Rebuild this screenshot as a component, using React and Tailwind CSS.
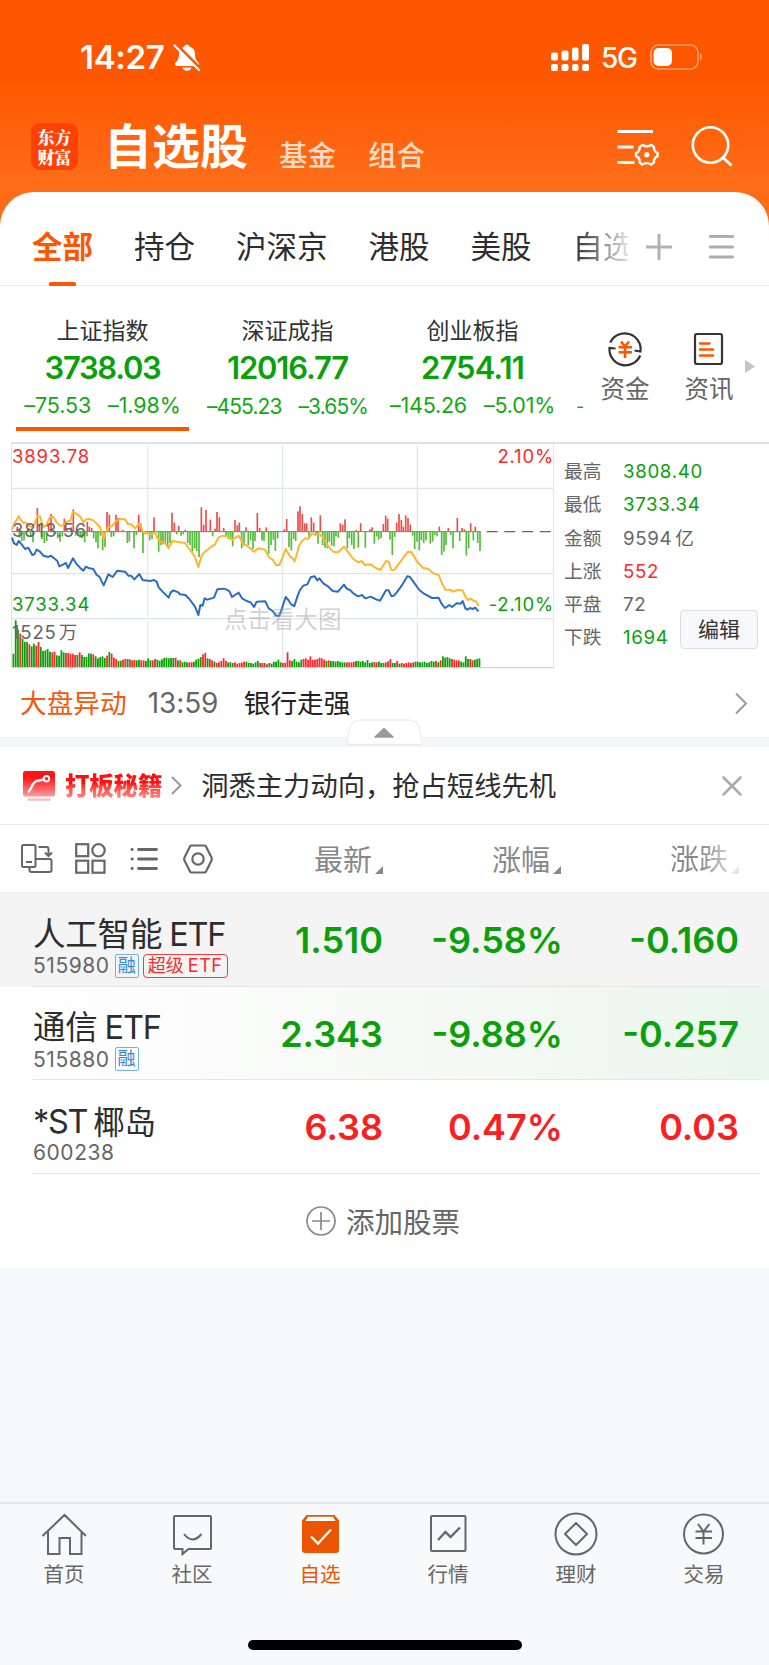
import React from "react";

const BLUE = "36,308 42,325 50,330 56,318 65,328 75,342 85,338 97,360 103,358 110,344 120,350 130,362 145,366 152,362 165,372 172,378 178,394 190,388 198,384 204,399 219,370 228,385 240,398 250,407 258,395 268,400 280,402 290,420 298,425 311,451 325,418 338,426 352,407 375,410 385,422 393,422 403,433 418,417 428,435 450,438 462,435 470,440 476,457 490,472 506,488 512,472 520,466 535,472 540,478 556,480 568,492 585,515 595,540 601,510 608,512 614,490 622,494 642,488 652,463 672,461 685,466 690,472 696,486 716,473 726,490 740,498 752,502 762,516 770,500 796,499 806,520 818,528 828,542 838,542 846,520 857,486 865,495 873,508 883,513 892,485 900,465 910,452 922,448 932,427 944,424 952,436 958,430 970,445 985,455 998,468 1014,470 1032,449 1040,461 1050,465 1060,475 1074,484 1086,480 1096,490 1112,485 1130,494 1140,497 1158,466 1166,466 1174,483 1182,482 1192,470 1205,452 1222,424 1230,426 1240,440 1258,465 1272,476 1296,489 1316,488 1324,505 1335,519 1348,510 1356,516 1370,505 1382,506 1388,498 1396,520 1403,524 1410,519 1418,522 1426,518 1435,529";
const YELLOW = "36,285 44,262 50,255 56,243 62,254 70,264 76,262 84,270 96,276 103,268 112,243 120,245 130,276 138,272 150,246 160,246 170,262 180,272 190,270 200,260 210,258 219,231 228,236 240,244 250,262 258,253 268,252 280,256 292,268 300,276 311,310 318,290 325,276 335,274 350,256 362,252 375,253 385,268 395,268 405,280 418,266 428,290 440,294 455,298 465,292 475,314 485,322 495,324 506,340 517,318 535,321 555,324 570,344 585,366 595,396 605,362 615,350 630,338 645,328 655,308 668,302 685,304 697,314 716,302 728,325 745,335 762,350 775,340 795,344 808,368 818,374 828,390 838,390 848,366 857,342 870,364 878,370 884,379 892,352 898,330 906,318 916,310 926,311 936,294 944,300 958,296 968,308 976,318 985,335 1000,350 1014,352 1032,335 1045,352 1060,372 1075,382 1085,378 1095,390 1112,388 1125,398 1141,405 1158,378 1166,380 1174,405 1184,404 1195,388 1210,368 1224,350 1234,351 1250,378 1268,398 1285,402 1300,415 1316,420 1326,445 1336,464 1350,464 1358,470 1374,465 1388,466 1396,485 1404,495 1412,491 1420,497 1428,499 1436,513";
const UP = [[52,14],[84,10],[112,70],[118,20],[146,22],[153,52],[193,38],[200,8],[214,12],[220,66],[262,28],[268,14],[275,10],[321,58],[328,50],[348,50],[354,40],[368,4],[416,50],[422,24],[462,42],[516,56],[523,26],[536,16],[556,5],[604,72],[611,20],[618,64],[631,35],[645,8],[651,58],[658,42],[671,10],[705,34],[712,18],[718,26],[738,12],[772,55],[779,10],[799,12],[853,6],[860,37],[894,60],[900,75],[907,52],[914,24],[920,24],[934,42],[941,26],[961,48],[1021,24],[1028,20],[1035,36],[1069,4],[1082,24],[1110,6],[1116,12],[1150,22],[1157,47],[1163,38],[1190,26],[1197,52],[1204,34],[1210,14],[1217,48],[1224,40],[1231,20],[1318,14],[1345,10],[1372,40],[1386,10],[1393,6],[1412,24],[1426,14]];
const DOWN = [[58,18],[65,28],[72,26],[92,16],[99,32],[126,22],[133,34],[140,28],[166,8],[173,20],[180,30],[187,14],[227,12],[234,10],[241,18],[247,20],[254,32],[261,14],[281,20],[288,32],[294,50],[301,12],[308,56],[315,46],[334,16],[341,14],[382,34],[388,30],[402,50],[409,10],[429,64],[436,8],[449,26],[456,22],[476,60],[483,40],[489,38],[496,36],[503,44],[510,34],[530,8],[543,12],[550,8],[563,34],[570,40],[577,60],[584,50],[590,58],[597,76],[638,14],[678,16],[685,22],[692,24],[698,44],[725,50],[732,42],[745,40],[752,26],[759,52],[765,28],[786,26],[792,28],[806,66],[813,40],[820,24],[826,58],[833,20],[867,46],[874,56],[881,22],[887,28],[927,16],[948,8],[954,36],[968,40],[975,48],[982,50],[988,30],[995,42],[1002,44],[1008,14],[1015,18],[1042,50],[1048,20],[1055,40],[1062,52],[1075,48],[1096,48],[1123,36],[1130,14],[1136,24],[1143,20],[1170,24],[1177,70],[1184,16],[1238,12],[1244,52],[1251,30],[1258,56],[1264,26],[1271,34],[1278,26],[1291,36],[1298,30],[1304,10],[1311,14],[1325,70],[1332,60],[1338,40],[1352,10],[1359,50],[1379,28],[1399,72],[1406,50],[1420,26],[1433,34],[1440,58]];
// Runs of volume bars: colour code followed by bar height.
const VOLUME = "g40 g140 g112 r100 g85 g75 g75 r68 g62 g70 r64 r75 g60 g48 g50 g54 g46 r44 r46 g35 g34 g50 g44 r42 r42 r40 r40 r36 g36 r44 g36 g30 g30 g41 g40 r38 g32 g26 g30 g32 g27 r34 g45 r40 r28 r24 g18 g19 r22 r24 g24 r23 r20 r21 g20 g22 r20 r20 g18 g26 g20 r20 r24 g22 g19 g23 g27 g28 g26 g27 g27 r28 g20 r20 g14 g16 g14 r14 r14 g16 g22 g25 g30 r38 r43 g26 r24 r20 g16 r12 r14 r18 r26 r18 g14 g14 g12 r14 r10 r12 r13 r16 g16 g12 g12 g10 g14 g18 r12 r12 r12 g8 r12 g10 g16 g16 g22 g14 r12 r13 r44 r20 g18 g24 g16 g14 g22 r24 r26 r22 r32 r22 r22 r24 r28 r26 r22 g18 r20 g18 g18 g16 g18 g15 g14 g14 r14 r14 r14 r15 g18 g18 g16 g18 g14 g21 g12 g14 r15 r14 g16 g12 g12 r14 r17 r24 g12 g12 r18 g10 r12 r10 r12 r14 r12 r14 g16 g16 g14 g14 g16 g12 g14 g18 g16 r18 g14 r20 g32 g28 g30 g26 r24 r22 r20 r20 g16 g14 g32 g24 r24 r20 g22 g24 g26".split(" ");
const PITCH = 1405 / VOLUME.length;

function Chart() {
  return (
    <svg className="block h-[228px] w-[544px]" viewBox="33 18 1632 684">
      <g fill="none" stroke="#dfe3ec" strokeWidth="4">
        <path d="M34.500 24V699M1661 24V699" strokeWidth="3" />
        <path d="M443 32V546M443 558V699M848 32V546M848 558V699M1252 32V546M1252 558V699" stroke="#e3e7ef" />
        <path d="M36 160H1660M36 416H1660M36 551H1660" />
        <path d="M36 698H1662" stroke="#d3d5db" />
        <path d="M33 24H1665" stroke="#dfe1ea" strokeWidth="6" />
      </g>
      <path d="M36 290H1442" stroke="#777" strokeWidth="3" />
      <path d="M1460 290H1660" stroke="#666" strokeWidth="3.500" strokeDasharray="33 20" />
      {UP.map(([x, h]) => <rect key={x} x={x - 2.5} y={289 - h} width="5" height={h} fill="#ef4b4b" />)}
      {DOWN.map(([x, h]) => <rect key={x} x={x - 2.5} y="290" width="5" height={h} fill="#55bb3b" />)}
      {VOLUME.map((v, i) => {
        const h = Number(v.slice(1));
        return <rect key={i} x={37.5 + i * PITCH} y={696 - h} width="5.4" height={h} fill={v[0] === "r" ? "#fb2a2a" : "#0aa00a"} />;
      })}
      <polyline points={YELLOW} fill="none" stroke="#ffb62e" strokeWidth="6" strokeLinejoin="round" />
      <polyline points={BLUE} fill="none" stroke="#2a6cc4" strokeWidth="6" strokeLinejoin="round" />
    </svg>
  );
}

function StatusBar() {
  return (
    <div className="flex h-[114px] shrink-0 items-center pl-[80px] text-white">
      <span className="w-[87px] pt-[1px] text-[33px] font-semibold leading-none tracking-[-0.300px]">14:27</span>
      <svg className="ml-[6px] h-[29px] w-[28px]" viewBox="0 0 28 29">
        <path d="M14 1.500c-1.300 0-2.200.7-2.500 1.900C8 4.500 6 7.300 6 11c0 4.500-1 6-3.200 8.300C1.300 20.900 1.700 23 3.500 23h21c1.800 0 2.200-2.100.7-3.700C23 17 22 15.500 22 11c0-3.700-2-6.500-5.500-7.600C16.200 2.200 15.300 1.500 14 1.500zM9.500 24.500c.5 2 2.200 3.300 4.500 3.300s4-1.300 4.500-3.300z" fill="#fff" />
        <path d="M2.500 .5L28 26" stroke="#ff5700" strokeWidth="3" />
        <path d="M1.500 2.500L26 27" stroke="#fff" strokeWidth="2.200" strokeLinecap="round" />
      </svg>
      <svg className="ml-[350px] h-[29px] w-[39px]" viewBox="0 0 39 29" fill="#fff">
        <rect x="0" y="9.500" width="7" height="8" rx="2" /><rect x="10.500" y="7.500" width="7" height="10" rx="2" /><rect x="21" y="4.500" width="6.500" height="13" rx="2" /><rect x="31" y="1" width="7" height="16.500" rx="2" />
        <rect x="0" y="21" width="7" height="7" rx="2" /><rect x="10.500" y="21" width="7" height="7" rx="2" /><rect x="21" y="21" width="6.500" height="7" rx="2" /><rect x="31" y="21" width="7" height="7" rx="2" />
      </svg>
      <span className="ml-[11px] w-[37px] pt-[2px] text-[28px] font-medium leading-none tracking-[-1.200px]">5G</span>
      <svg className="ml-[12px] h-[26px] w-[54px]" viewBox="0 0 54 26">
        <rect x="1" y="1" width="47" height="24" rx="7.500" fill="none" stroke="#ffa069" strokeWidth="1.600" />
        <rect x="3.500" y="4" width="18.500" height="18" rx="5" fill="#fff" />
        <path d="M50 9.500c2.500 1 2.500 6 0 7z" fill="#ffa069" />
      </svg>
    </div>
  );
}

function TitleBar() {
  return (
    <div className="flex h-[78px] shrink-0 items-start pl-[31px] text-white">
      <div className="mt-[9px] flex h-[47px] w-[47px] flex-col items-center justify-center rounded-[9px] bg-[#ff4106] font-['Noto_Serif_CJK_SC','Noto_Sans_CJK_SC',serif] text-[17px] font-black leading-[20px]">
        <span>东方</span><span>财富</span>
      </div>
      <span className="ml-[26px] mt-[9px] w-[144px] whitespace-nowrap text-[48px] font-bold leading-[48px]">自选股</span>
      <span className="ml-[31px] mt-[28px] text-[28.500px] font-medium leading-[28px] text-[#ffdcc8]">基金</span>
      <span className="ml-[32px] mt-[28px] text-[28.500px] font-medium leading-[28px] text-[#ffdcc8]">组合</span>
      <svg className="ml-[191px] mt-[13px] h-[40px] w-[44px]" viewBox="0 0 44 40" fill="none" stroke="#fff" strokeWidth="2.800">
        <path d="M1.500 4.500H37M1.500 20H17.500M1.500 35.500H18.500" />
        <path d="M26.300 17.900Q30.800 20.600 35.300 17.900L38 20Q37.400 24.200 41.600 26.100V29.200Q37.400 31.100 38 35.400L35.300 37.500Q30.800 34.800 26.300 37.500L23.600 35.400Q24.200 31.100 20 29.200V26.100Q24.200 24.200 23.600 20Z" strokeWidth="2.400" strokeLinejoin="round" />
        <circle cx="30.800" cy="27.700" r="2.600" fill="#fff" stroke="none" />
      </svg>
      <svg className="ml-[31px] mt-[11px] h-[43px] w-[43px]" viewBox="0 0 43 43" fill="none" stroke="#fff" strokeWidth="2.600">
        <circle cx="19.500" cy="20" r="17.700" /><path d="M31.500 32L40.500 40.500" strokeWidth="3" />
      </svg>
    </div>
  );
}

function Tabs() {
  return (
    <div className="flex h-[94px] shrink-0 items-center border-b border-[#ececec] pl-[32px]">
      <div className="flex h-[94px] w-[596px] gap-[41px] self-start overflow-hidden whitespace-nowrap text-[30.500px] leading-[94px] text-[#2d2d2d]">
        <div className="relative h-[94px] text-[#ff5500]">
          <span className="block pt-[8px] font-bold">全部</span>
          <div className="absolute bottom-0 left-[17px] h-[4px] w-[27px] rounded-t-[2px] bg-[#ff5500]" />
        </div>
        {["持仓", "沪深京", "港股", "美股"].map((t) => <span key={t} className="pt-[8px]">{t}</span>)}
        <span className="bg-gradient-to-r from-[#2d2d2d] to-[#f0f0f0] to-[58px] bg-clip-text pt-[8px] text-transparent">自选</span>
      </div>
      <svg className="ml-[18px] mt-[17px] h-[26px] w-[26px] shrink-0" viewBox="0 0 26 26" stroke="#b2b2b2" strokeWidth="3"><path d="M0 13H26M13 0V26" /></svg>
      <svg className="ml-[37px] mt-[17px] h-[26px] w-[25px] shrink-0" viewBox="0 0 25 26" stroke="#aeaeae" strokeWidth="2.800"><path d="M1 2.500H24M1 13H24M1 23H24" strokeLinecap="round" /></svg>
    </div>
  );
}

const INDICES = [
  ["上证指数", "3738.03", "–75.53", "–1.98%", "tracking-[-1.300px]", "text-[21.500px] tracking-[-0.100px]"],
  ["深证成指", "12016.77", "–455.23", "–3.65%", "tracking-[-1.200px]", "text-[21px] tracking-[-0.900px]"],
  ["创业板指", "2754.11", "–145.26", "–5.01%", "tracking-[-0.900px]", "text-[21.500px] tracking-[-0.200px]"],
];

function IndexRow() {
  return (
    <div className="flex h-[156px] shrink-0 pl-[16px]">
      <div className="flex w-[568px] overflow-hidden whitespace-nowrap">
        {INDICES.map(([n, v, a, b, c1, c2], i) => (
          <div key={n} className={i ? "ml-[12px] w-[173px] shrink-0" : "w-[173px] shrink-0"}>
            <div className="mt-[32px] flex h-[26px] items-center justify-center text-[23px] leading-none text-[#333]"><span>{n}</span></div>
            <div className={"mt-[6px] flex h-[34px] items-center justify-center text-[31px] font-semibold leading-none text-[#0aa00a] " + c1}><span>{v}</span></div>
            <div className={"mt-[9px] flex h-[26px] items-center justify-center gap-[17px] leading-none text-[#12a912] " + c2}><span>{a}</span><span>{b}</span></div>
            {i === 0 && <div className="mt-[8px] h-[4px] bg-[#ff5500]" />}
          </div>
        ))}
        <span className="ml-[17px] mt-[108px] text-[18px] leading-[26px] text-[#12a912]">-</span>
      </div>
      <div className="ml-[16px] mt-[44px] flex w-[50px] shrink-0 flex-col items-center whitespace-nowrap">
        <svg className="h-[38px] w-[38px]" viewBox="0 0 38 38" fill="none" stroke="#333" strokeWidth="2.200">
          <path d="M4.200 12.500A16 16 0 0 1 34.500 21.500L28.500 20.500M34.200 25.500A16 16 0 0 1 3.500 18L9.500 18.500" />
          <path d="M15 11.500L19 16.500L23 11.500M12.500 17.200H26M12.500 22.200H26M19 16.500V28" stroke="#ff5500" strokeWidth="2.600" />
        </svg>
        <span className="mt-[8px] text-[24.500px] leading-[26px] text-[#666]">资金</span>
      </div>
      <div className="ml-[34px] mt-[44px] flex w-[50px] shrink-0 flex-col items-center whitespace-nowrap">
        <svg className="h-[38px] w-[38px]" viewBox="0 0 38 38" fill="none" stroke="#333" strokeWidth="2.200">
          <rect x="5" y="4" width="27" height="30" rx="2" />
          <path d="M10 13.500H19.500M10 19.500H23M10 25.500H23" stroke="#ff5500" strokeWidth="2.600" strokeLinecap="round" />
        </svg>
        <span className="mt-[8px] text-[24.500px] leading-[26px] text-[#666]">资讯</span>
      </div>
      <svg className="ml-[11px] mt-[74px] h-[13px] w-[10px] shrink-0" viewBox="0 0 10 13"><path d="M0 0L10 6.500L0 13Z" fill="#c4c4c4" /></svg>
    </div>
  );
}

const STATS = [
  ["最高", "3808.40", "text-[#0aa00a]"], ["最低", "3733.34", "text-[#0aa00a]"], ["金额", <>9594<span className="ml-[3px]">亿</span></>, "text-[#666]"],
  ["上涨", "552", "text-[#fb2a2a]"], ["平盘", "72", "text-[#666]"], ["下跌", "1694", "text-[#0aa00a]"],
];

function Market() {
  return (
    <div className="flex h-[227px] shrink-0">
      <div className="relative ml-[11px] h-[227px] w-[544px] text-[18.500px] leading-[20px] tracking-[0.850px]">
        <div className="absolute left-0 top-[-1px]"><Chart /></div>
        <span className="absolute left-[213px] top-[166px] text-[23.500px] leading-[24px] tracking-normal text-[#999]/45">点击看大图</span>
        <span className="absolute left-[1px] top-[4px] text-[#fb2a2a]">3893.78</span>
        <span className="absolute right-[1px] top-[4px] text-[#fb2a2a]">2.10%</span>
        <span className="absolute left-[1px] top-[78px] text-[#666]">3813.56</span>
        <span className="absolute left-[1px] top-[152px] text-[#0aa00a]">3733.34</span>
        <span className="absolute right-[1px] top-[152px] text-[#0aa00a]">-2.10%</span>
        <span className="absolute left-[1px] top-[180px] whitespace-nowrap text-[#666]">1525<span className="ml-[2px]">万</span></span>
      </div>
      <div className="relative grow border-t-2 border-[#dfe1ea] pt-[12px]">
        {STATS.map(([k, v, c]) => (
          <div key={k} className="flex h-[33.200px] items-center pl-[9px] text-[18.700px] leading-none">
            <span className="w-[59px] text-[#666]">{k}</span><span className={"tracking-[0.650px] " + c}>{v}</span>
          </div>
        ))}
        <button className="absolute right-[11px] top-[166px] flex h-[39px] w-[78px] items-center justify-center rounded-[4px] border border-[#dadce3] bg-[#f7f8fb] text-[21px] leading-none text-[#333]">编辑</button>
      </div>
    </div>
  );
}

function News() {
  return (
    <div className="relative h-[78px] shrink-0 border-b-[10px] border-[#f5f6fa]">
      <div className="flex h-[68px] items-center pl-[20px] text-[26.700px] leading-none">
        <span className="text-[#f25a0c]">大盘异动</span>
        <span className="ml-[21px] w-[96px] text-[28px] tracking-[-0.100px] text-[#666]">13:59</span>
        <span className="text-[#222]">银行走强</span>
        <svg className="ml-auto mr-[21px] h-[23px] w-[13px]" viewBox="0 0 13 23" fill="none" stroke="#999" strokeWidth="2"><path d="M1 1.500L11 11.500L1 21.500" /></svg>
      </div>
      <svg className="absolute left-[346px] top-[50px] h-[27px] w-[77px]" viewBox="0 0 77 27">
        <path d="M1 25C3 17 1 1 14 1H63C76 1 74 17 76 25" fill="#fff" stroke="#eeeff3" strokeWidth="1.500" />
        <path d="M1 25.500H76" stroke="#e9eaf0" strokeWidth="1.500" />
        <path d="M29 18L38 9.500L47 18Z" fill="#999" stroke="#999" strokeWidth="1.500" strokeLinejoin="round" />
      </svg>
    </div>
  );
}

function Promo() {
  return (
    <div className="flex h-[78px] shrink-0 items-center border-b border-[#e8e8e8] pl-[23px]">
      <svg className="h-[30px] w-[32px]" viewBox="0 0 32 30">
        <defs><linearGradient id="promo" x1="0" y1="0" x2="0" y2="1"><stop offset="0.250" stopColor="#ff1414" /><stop offset="1" stopColor="#ff9c9c" /></linearGradient></defs>
        <rect width="32" height="25.500" rx="2.500" fill="url(#promo)" />
        <rect x="4.500" y="27.500" width="23" height="2.300" rx="1" fill="#ffbcbc" />
        <path d="M5.500 20.500C8.500 19 9 9.500 15.500 9.500C17.500 9.500 18.500 9 21 8" fill="none" stroke="#fff" strokeWidth="2.400" strokeLinecap="round" />
        <circle cx="23.500" cy="7.700" r="2.700" fill="none" stroke="#fff" strokeWidth="2" />
      </svg>
      <span className="ml-[10px] bg-gradient-to-b from-[#ff1010] from-40% to-[#ff8a8a] bg-clip-text text-[24.500px] font-black leading-[26px] tracking-[-0.200px] text-transparent">打板秘籍</span>
      <svg className="ml-[9px] h-[19px] w-[11px]" viewBox="0 0 11 19" fill="none" stroke="#999" strokeWidth="2"><path d="M1 1L9.500 9.500L1 18" /></svg>
      <span className="ml-[19px] pt-[2px] text-[27.300px] leading-none text-[#2d2d2d]">洞悉主力动向，抢占短线先机</span>
      <svg className="ml-auto mr-[27px] h-[20px] w-[20px]" viewBox="0 0 20 20" stroke="#aaa" strokeWidth="2.500" strokeLinecap="round"><path d="M1.500 1.500L18.500 18.500M18.500 1.500L1.500 18.500" /></svg>
    </div>
  );
}

function Corner({ c }) {
  return <svg className="ml-[3px] mt-[19px] h-[8px] w-[8px]" viewBox="0 0 8 8"><path d="M8 0V8H0Z" fill={c} /></svg>;
}

function Toolbar() {
  return (
    <div className="flex h-[68px] shrink-0 items-center border-b border-[#ececec] pl-[21px] text-[29px] leading-none text-[#888]">
      <svg className="h-[29px] w-[32px]" viewBox="0 0 32 29" fill="none" stroke="#666" strokeWidth="2">
        <rect x="1" y="1" width="13.500" height="22" rx="1.500" /><path d="M5 18H11M17.500 3H25.500Q27.500 3 27.500 5V11M24 8.500L27.500 12L31 8.500" />
        <path d="M14.500 15H28.500Q30.500 15 30.500 17V26Q30.500 28 28.500 28H10.500Q8.500 28 8.500 26V23" />
      </svg>
      <svg className="ml-[22px] h-[31px] w-[31px]" viewBox="0 0 31 31" fill="none" stroke="#666" strokeWidth="2.200">
        <rect x="1.200" y="1.200" width="12" height="12" /><circle cx="23.500" cy="7.300" r="6.200" /><rect x="1.200" y="17.700" width="12" height="12" /><rect x="17.500" y="17.700" width="12" height="12" />
      </svg>
      <svg className="ml-[24px] h-[24px] w-[28px]" viewBox="0 0 28 24" fill="none" stroke="#666" strokeWidth="2.800" strokeLinecap="round"><path d="M8.500 2.500H26.500M8.500 12H26.500M8.500 21.500H26.500M2 2.500H2.300M2 12H2.300M2 21.500H2.300" /></svg>
      <svg className="ml-[25px] h-[30px] w-[30px]" viewBox="0 0 30 30" fill="none" stroke="#666" strokeWidth="2.200" strokeLinejoin="round"><path d="M8.500 1.500H21.500Q22.300 1.500 23 2.500L28.500 13.500Q29 15 28.500 16.500L23 27.500Q22.300 28.500 21.500 28.500H8.500Q7.700 28.500 7 27.500L1.500 16.500Q1 15 1.500 13.500L7 2.500Q7.700 1.500 8.500 1.500Z" /><circle cx="15" cy="15" r="5.700" /></svg>
      <div className="ml-[101px] flex items-center pt-[3px]"><span>最新</span><Corner c="#888" /></div>
      <div className="ml-[109px] flex items-center pt-[3px]"><span>涨幅</span><Corner c="#888" /></div>
      <div className="ml-[109px] flex items-center pt-[3px]"><span className="bg-gradient-to-r from-[#888] from-50% to-[#ccc] bg-clip-text leading-[34px] text-transparent">涨跌</span><Corner c="#e6e6e6" /></div>
    </div>
  );
}

function Rows() {
  const rows = [
    { name: <><span>人工智能</span><span className="ml-[7px] tracking-[-1.200px]">ETF</span></>, code: "515980", tags: 2, vals: ["1.510", "-9.58%", "-0.160"], c: "text-[#0aa00a]", bg: "bg-[#f4f4f4]" },
    { name: <><span>通信</span><span className="ml-[7px] tracking-[-1.200px]">ETF</span></>, code: "515880", tags: 1, vals: ["2.343", "-9.88%", "-0.257"], c: "text-[#0aa00a]", bg: "bg-gradient-to-r from-white via-[#f7f9f7] via-50% to-[#eaf7ec]" },
    { name: <><span className="tracking-[-1.300px]">*ST</span><span className="ml-[6px] text-[31.500px]">椰岛</span></>, code: "600238", tags: 0, vals: ["6.38", "0.47%", "0.03"], c: "text-[#fb2020]", bg: "bg-white" },
  ];
  return rows.map((r) => (
    <div key={r.code} className={"relative flex h-[93.700px] shrink-0 " + r.bg}>
      <div className="ml-[33px] w-[200px] pt-[24px]">
        <div className="flex h-[36px] items-center whitespace-nowrap text-[32.500px] leading-none tracking-[-0.200px] text-[#2d2d2d]">{r.name}</div>
        <div className="flex h-[25px] items-center">
          <span className="text-[21px] leading-none tracking-[0.550px] text-[#666]">{r.code}</span>
          {r.tags > 0 && <span className="ml-[5px] flex h-[24px] w-[24px] items-center justify-center rounded-[2px] border-[1.500px] border-[#77aeea] text-[18px] leading-none text-[#3585e0]">融</span>}
          {r.tags > 1 && <span className="ml-[4px] flex h-[24px] w-[85px] items-center justify-center whitespace-nowrap rounded-[4px] border-[1.500px] border-[#fb3a3a] text-[18px] leading-none text-[#fb2a2a]">超级<span className="ml-[4px] tracking-[0.500px]">ETF</span></span>}
        </div>
      </div>
      <div className={"flex items-center text-right text-[36px] font-semibold leading-none " + r.c}>
        <span className="w-[150px]">{r.vals[0]}</span><span className="w-[180px]">{r.vals[1]}</span><span className="w-[176px]">{r.vals[2]}</span>
      </div>
      <div className="absolute bottom-0 left-[32px] right-[9px] h-px bg-[#e6e6e6]" />
    </div>
  ));
}

function Nav({ label, on, children }) {
  return (
    <div className={"flex w-[128px] flex-col items-center pt-[8px] " + (on ? "text-[#ec5500]" : "text-[#666]")}>
      <svg className="h-[46px] w-[46px]" viewBox="0 0 46 46" fill="none" stroke="currentColor" strokeWidth="2">{children}</svg>
      <span className="mt-[4px] text-[20.500px] leading-[26px]">{label}</span>
    </div>
  );
}

export default function App() {
  return (
    <div className="flex h-[1665px] w-[769px] flex-col overflow-hidden bg-[#f7f8fb] font-['Inter','Noto_Sans_CJK_SC',sans-serif]">
      <div className="flex flex-col bg-[linear-gradient(#ff5700_0px,#ff5700_80px,#ff6c18_180px,#ff6c18_100%)]">
        <StatusBar />
        <TitleBar />
        <div className="flex flex-col rounded-t-[34px] bg-white">
          <Tabs />
          <IndexRow />
        </div>
      </div>
      <div className="flex flex-col bg-white">
        <Market />
        <News />
        <Promo />
        <Toolbar />
        <Rows />
        <div className="flex h-[94px] items-center pl-[306px]">
          <svg className="h-[30px] w-[30px]" viewBox="0 0 30 30" fill="none" stroke="#888" strokeWidth="1.700"><circle cx="15" cy="15" r="14" /><path d="M6 15H24M15 6V24" /></svg>
          <span className="ml-[10px] pt-[4px] text-[28.500px] leading-none text-[#666]">添加股票</span>
        </div>
      </div>
      <div className="grow" />
      <div className="h-[163px] border-t-2 border-[#e8e9ec] bg-[#f8f9fb]">
        <div className="flex h-[136px]">
          <Nav label="首页"><path d="M1.500 24L23.500 3L45 24M7 19V42H18.500V26H29V42H40.500V19" /></Nav>
          <Nav label="社区"><path d="M6 4H41Q42 4 42 5V36Q42 37 41 37H19.500L13.500 42V37H6Q5 37 5 36V5Q5 4 6 4Z" /><path d="M15 22Q23.500 33 32.500 22" /></Nav>
          <Nav label="自选" on><path d="M9.500 3H37.500L42 8.500V38Q42 41 39 41H8Q5 41 5 38V8.500Z" fill="currentColor" stroke="none" /><path d="M11 4.800H36L38.500 9H8.500Z" fill="#fff" stroke="none" /><path d="M14 24.500L21 31.500L34 17.500" stroke="#fff" strokeWidth="2.300" /></Nav>
          <Nav label="行情"><rect x="6" y="4" width="34.500" height="35" rx="1" /><path d="M13 28L20.500 20L25.500 25L35 15.500" strokeWidth="2.300" /></Nav>
          <Nav label="理财"><circle cx="23" cy="22" r="20.500" /><path d="M23 11L34 22L23 33L12 22Z" strokeLinejoin="round" /></Nav>
          <Nav label="交易"><circle cx="22.500" cy="22" r="19.500" /><path d="M17 12L22.500 19.500L28.500 12M14.500 19.500H31M14.500 26H31M22.500 19.500V32.500" /></Nav>
        </div>
        <div className="mx-auto h-[10px] w-[274px] rounded-full bg-black" />
      </div>
    </div>
  );
}
